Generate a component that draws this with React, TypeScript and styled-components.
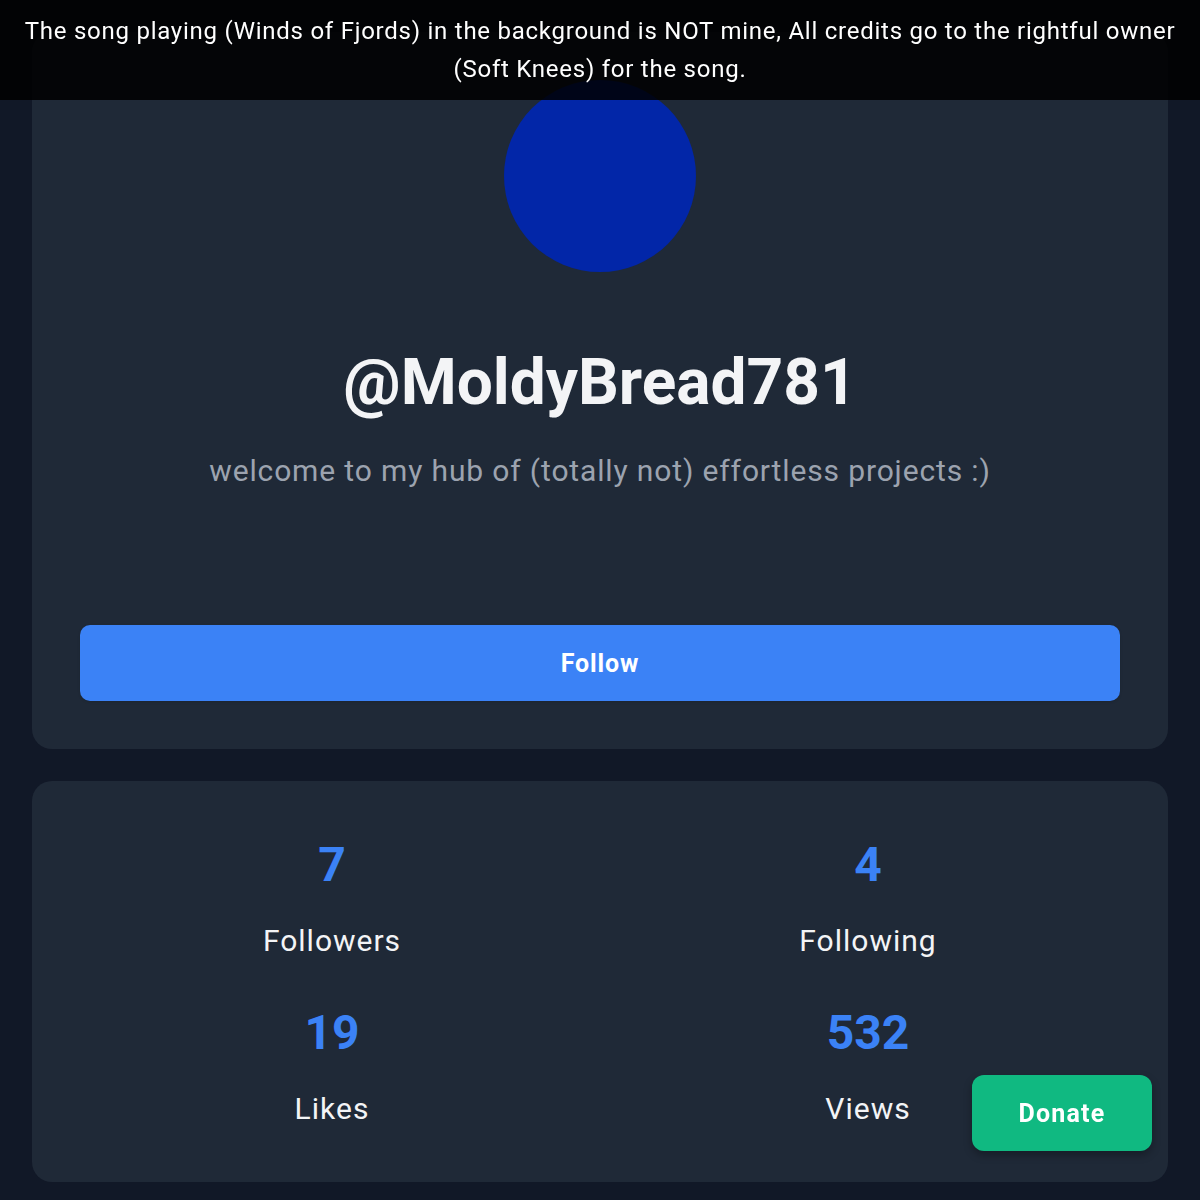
import styled, { createGlobalStyle } from "styled-components";

const stats = [
  { value: "7", label: "Followers" },
  { value: "4", label: "Following" },
  { value: "19", label: "Likes" },
  { value: "532", label: "Views" },
];

export default function App() {
  return (
    <>
      <GlobalStyle />
      <Notice>
        The song playing (Winds of Fjords) in the background is NOT mine, All
        credits go to the rightful owner (Soft Knees) for the song.
      </Notice>
      <Page>
        <ProfileCard>
          <Avatar />
          <Username>@MoldyBread781</Username>
          <Bio>welcome to my hub of (totally not) effortless projects :)</Bio>
          <FollowButton>Follow</FollowButton>
        </ProfileCard>
        <StatsCard>
          {stats.map((s) => (
            <Stat key={s.label}>
              <StatValue>{s.value}</StatValue>
              <StatLabel>{s.label}</StatLabel>
            </Stat>
          ))}
        </StatsCard>
      </Page>
      <DonateButton>Donate</DonateButton>
    </>
  );
}

const GlobalStyle = createGlobalStyle`
  * { box-sizing: border-box; }
  body {
    margin: 0;
    background: #111827;
    font-family: Roboto, "Liberation Sans", sans-serif;
    color: #f3f4f6;
  }
`;

const Notice = styled.div`
  position: fixed;
  top: 0;
  left: 0;
  right: 0;
  z-index: 10;
  height: 100px;
  padding: 12px 12px 0;
  background: rgba(0, 0, 0, 0.86);
  color: #ffffff;
  font-size: 24px;
  line-height: 38px;
  letter-spacing: 0.75px;
  text-align: center;
`;

const Page = styled.div`
  display: flex;
  flex-direction: column;
  gap: 32px;
  padding: 32px;
`;

const Card = styled.div`
  background: #1f2937;
  border-radius: 20px;
  padding: 48px;
`;

const ProfileCard = styled(Card)`
  display: flex;
  flex-direction: column;
  align-items: center;
`;

const Avatar = styled.div`
  width: 192px;
  height: 192px;
  border-radius: 50%;
  background: #0226a8;
`;

const Username = styled.h1`
  margin: 81px 0 0;
  font-size: 64px;
  line-height: 60px;
  font-weight: 700;
  color: #f3f4f6;
`;

const Bio = styled.p`
  margin: 40px 0 0;
  font-size: 30px;
  line-height: 36px;
  letter-spacing: 0.86px;
  color: #9ca3af;
`;

const FollowButton = styled.button`
  margin-top: 136px;
  width: 100%;
  height: 76px;
  border: none;
  border-radius: 10px;
  background: #3b82f6;
  color: #ffffff;
  font-family: inherit;
  font-size: 25px;
  font-weight: 700;
  letter-spacing: 0.9px;
  box-shadow: 0 1px 3px rgba(0, 0, 0, 0.12);
`;

const StatsCard = styled(Card)`
  display: grid;
  grid-template-columns: 1fr 1fr;
  column-gap: 32px;
  row-gap: 50px;
  padding: 60px 48px 55px;
`;

const Stat = styled.div`
  display: flex;
  flex-direction: column;
  align-items: center;
  gap: 34px;
`;

const StatValue = styled.div`
  font-size: 48px;
  line-height: 48px;
  font-weight: 700;
  color: #3b82f6;
`;

const StatLabel = styled.div`
  font-size: 30px;
  line-height: 36px;
  letter-spacing: 1px;
  color: #f3f4f6;
`;

const DonateButton = styled.button`
  position: fixed;
  right: 48px;
  bottom: 49px;
  width: 180px;
  height: 76px;
  border: none;
  border-radius: 12px;
  background: #10b981;
  color: #ffffff;
  font-family: inherit;
  font-size: 25px;
  font-weight: 700;
  letter-spacing: 1.2px;
  box-shadow: 0 4px 8px rgba(0, 0, 0, 0.3);
`;
